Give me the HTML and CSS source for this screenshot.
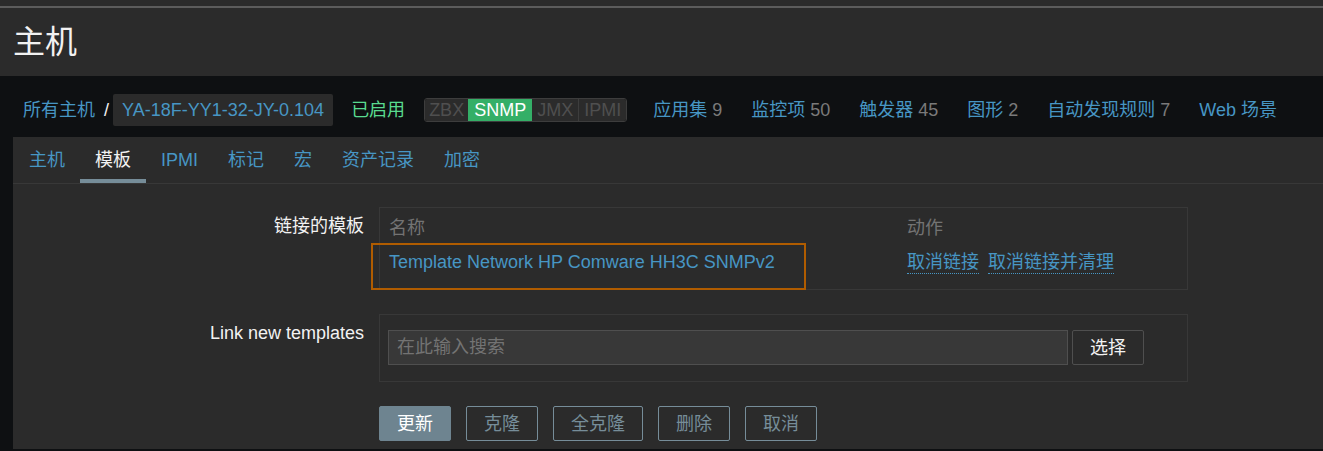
FILE: index.html
```html
<!DOCTYPE html>
<html lang="zh-CN">
<head>
<meta charset="utf-8">
<title>主机</title>
<link rel="stylesheet" href="styles.css">
</head>
<body>
<div class="chrome"></div>
<header class="page-header"><h1 class="page-title">主机</h1></header>
<nav class="host-nav">
  <a class="link crumb">所有主机</a>
  <span class="crumb-sep">/</span>
  <span class="crumb-current">YA-18F-YY1-32-JY-0.104</span>
  <span class="status-on">已启用</span>
  <div class="status-box">
    <span class="status-item s-zbx">ZBX</span><span class="status-item is-on">SNMP</span><span class="status-item">JMX</span><span class="status-item">IPMI</span>
  </div>
  <ul class="nav-links">
    <li><a class="link">应用集</a> <span class="count">9</span></li>
    <li><a class="link">监控项</a> <span class="count">50</span></li>
    <li><a class="link">触发器</a> <span class="count">45</span></li>
    <li><a class="link">图形</a> <span class="count">2</span></li>
    <li><a class="link">自动发现规则</a> <span class="count">7</span></li>
    <li><a class="link">Web 场景</a></li>
  </ul>
</nav>
<main class="content">
  <ul class="tabs">
    <li class="tab">主机</li>
    <li class="tab is-active">模板</li>
    <li class="tab">IPMI</li>
    <li class="tab">标记</li>
    <li class="tab">宏</li>
    <li class="tab">资产记录</li>
    <li class="tab">加密</li>
  </ul>
  <form class="form-grid">
    <div class="form-label">链接的模板</div>
    <div class="box linked">
      <table class="tpl-table">
        <thead>
          <tr><th class="col-name">名称</th><th>动作</th></tr>
        </thead>
        <tbody>
          <tr>
            <td class="col-name"><a class="link">Template Network HP Comware HH3C SNMPv2</a></td>
            <td><span class="actions-inline"><a class="link dotted">取消链接</a><a class="link dotted">取消链接并清理</a></span></td>
          </tr>
        </tbody>
      </table>
      <div class="highlight"></div>
    </div>
    <div class="form-label">Link new templates</div>
    <div class="box link-new">
      <div class="ms-input">在此输入搜索</div>
      <button type="button" class="btn-grey">选择</button>
    </div>
    <div></div>
    <div class="form-actions">
      <button type="button" class="btn btn-main">更新</button>
      <button type="button" class="btn btn-alt">克隆</button>
      <button type="button" class="btn btn-alt">全克隆</button>
      <button type="button" class="btn btn-alt">删除</button>
      <button type="button" class="btn btn-alt">取消</button>
    </div>
  </form>
</main>
</body>
</html>
```

FILE: styles.css
```css
* { box-sizing: border-box; }
html, body { height: 100%; }
body {
  margin: 0;
  background: #0e1012;
  color: #f2f2f2;
  font-family: "Liberation Sans", "Noto Sans CJK SC", sans-serif;
  font-size: 18px;
  line-height: 22px;
  overflow: hidden;
}
ul { list-style: none; margin: 0; padding: 0; }
.link { color: #4796c4; text-decoration: none; cursor: pointer; }

.chrome {
  height: 8px;
  background: #2b2b2b;
  border-bottom: 2px solid #5c5c5c;
}
.page-header {
  height: 68px;
  background: #2b2b2b;
  display: flex;
  align-items: center;
  padding-left: 13px;
}
.page-title {
  margin: 0;
  font-size: 32px;
  line-height: 40px;
  font-weight: normal;
  color: #f2f2f2;
}

.host-nav {
  height: 61px;
  display: flex;
  align-items: center;
  padding: 6px 0 0 23px;
}
.crumb-sep { margin: 0 4px 0 9px; color: #f2f2f2; }
.crumb-current {
  background: #2b2b2b;
  color: #4796c4;
  height: 32px;
  line-height: 32px;
  padding: 0 9px;
  border-radius: 2px;
}
.status-on { color: #59db8f; margin-left: 18px; }
.status-box {
  display: flex;
  margin-left: 19px;
  height: 24px;
  border: 1px solid #3d3d3d;
  border-radius: 3px;
  overflow: hidden;
}
.status-item {
  line-height: 22px;
  padding: 0 5px;
  color: #4f4f4f;
  background: #2b2b2b;
  border-left: 1px solid #3d3d3d;
}
.status-item.s-zbx { padding: 0 4px; border-left: 0; }
.status-item.is-on { background: #34af67; color: #ffffff; padding: 0 6px; border-left: 0; }
.status-item.is-on + .status-item { border-left: 0; }
.nav-links { display: flex; gap: 29px; margin-left: 26px; }
.count { color: #7a7a7a; }

.content {
  margin-left: 13px;
  background: #2b2b2b;
  height: calc(100% - 139px);
}
.tabs {
  display: flex;
  height: 47px;
  padding-left: 1px;
  border-bottom: 1px solid #383838;
}
.tab {
  padding: 12px 15px 0;
  color: #4796c4;
  height: 46px;
}
.tab.is-active {
  color: #f2f2f2;
  border-bottom: 4px solid #768d99;
}

.form-grid {
  display: grid;
  grid-template-columns: 351px 809px;
  column-gap: 15px;
  row-gap: 24px;
  padding-top: 23px;
}
.form-label {
  text-align: right;
  padding-top: 8px;
  color: #f2f2f2;
}
.box {
  border: 1px solid #383838;
  position: relative;
}
.tpl-table {
  width: 100%;
  border-collapse: collapse;
}
.tpl-table th {
  text-align: left;
  font-weight: normal;
  color: #737373;
  padding: 9px 9px 4px;
  height: 35px;
  vertical-align: top;
}
.tpl-table td {
  padding: 8px 9px 14px;
  height: 46px;
  vertical-align: top;
}
.tpl-table .col-name { width: 518px; }
.actions-inline { display: flex; gap: 9px; white-space: nowrap; }
.dotted { border-bottom: 1px dotted #4796c4; }
.highlight {
  position: absolute;
  left: -9px;
  top: 35px;
  width: 435px;
  height: 47px;
  border: 2px solid #b05c00;
  pointer-events: none;
}

.link-new {
  display: flex;
  gap: 4px;
  padding: 15px 8px 16px;
}
.ms-input {
  width: 680px;
  height: 35px;
  line-height: 33px;
  background: #383838;
  border: 1px solid #4f4f4f;
  color: #737373;
  padding: 0 8px;
}
.btn-grey {
  width: 72px;
  height: 35px;
  background: #2b2b2b;
  border: 1px solid #4f4f4f;
  border-radius: 2px;
  color: #f2f2f2;
  font: inherit;
  padding: 0;
}

.form-actions { display: flex; gap: 15px; }
.btn {
  height: 35px;
  padding: 0 17px;
  font: inherit;
  border-radius: 2px;
  border: 1px solid #768d99;
}
.btn-main { background: #6e8490; color: #ffffff; border-color: #6e8490; }
.btn-alt { background: transparent; color: #768d99; }
```
